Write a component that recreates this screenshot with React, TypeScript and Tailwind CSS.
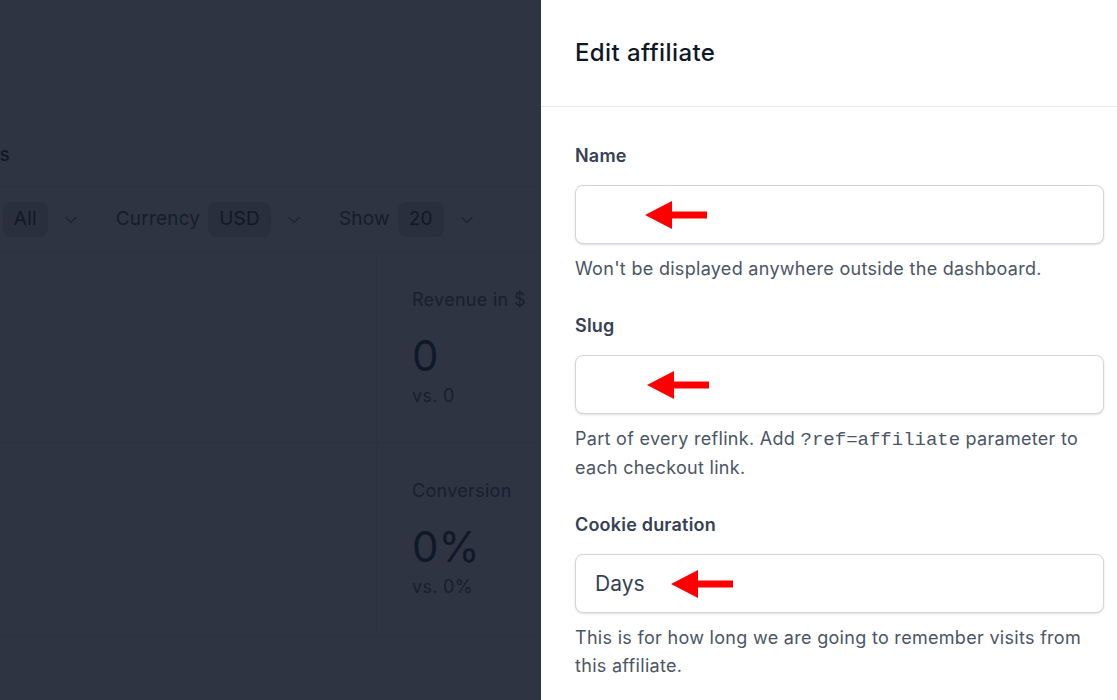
import { ChevronDown } from "lucide-react";

const font = { fontFamily: "Inter, 'Noto Sans', sans-serif" };

const Arrow = ({ left }: { left: number }) => (
  <svg
    width="62"
    height="28"
    viewBox="0 0 62 28"
    className="absolute top-1/2 -translate-y-1/2"
    style={{ left }}
  >
    <polygon points="0,14 27,0 27,10.5 62,10.5 62,17.5 27,17.5 27,28" fill="#ff0000" />
  </svg>
);

const Filter = ({ label, value, className = "" }: { label: string; value: string; className?: string }) => (
  <div className={`flex items-center ${className}`}>
    <span className="text-gray-700">{label}</span>
    <span className="ml-[8px] rounded-lg bg-gray-300 px-[11px] py-[3px] text-gray-900">{value}</span>
    <ChevronDown className="ml-[13px] h-5 w-5 text-gray-500" strokeWidth={1.75} />
  </div>
);

const Stat = ({ label, value, prev, pt }: { label: string; value: string; prev: string; pt: string }) => (
  <div className={`border-b border-gray-200 px-[35px] ${pt}`}>
    <div className="text-[18px] leading-[27px] tracking-[0.3px] text-gray-600">{label}</div>
    <div className="mt-[17px] text-[42px] leading-[52px] text-gray-900">{value}</div>
    <div className="text-[18px] leading-[27px] tracking-[0.3px] text-gray-600">{prev}</div>
  </div>
);

const Field = ({
  label,
  arrow,
  value,
  children,
}: {
  label: string;
  arrow: number;
  value?: string;
  children: React.ReactNode;
}) => (
  <div className="flex flex-col">
    <label className="text-[18px] font-semibold leading-[24px] tracking-[0.2px] text-gray-700">{label}</label>
    <div className="relative mt-[17px] flex h-[59px] items-center rounded-lg border border-gray-300 bg-white px-[19px] shadow-sm">
      {value && <span className="text-[21px] text-gray-700">{value}</span>}
      <Arrow left={arrow} />
    </div>
    <p className="mt-[11px] text-[18px] leading-[28px] tracking-[0.3px] text-gray-600">{children}</p>
  </div>
);

export default function App() {
  return (
    <div className="relative h-[700px] w-[1117px] overflow-hidden bg-white" style={font}>
      {/* page behind the drawer */}
      <div className="flex flex-col">
        <div className="flex h-[187px] items-end border-b border-gray-200 pb-[17px]">
          <h1 className="-ml-[73px] text-[19px] font-medium tracking-[0.3px] text-gray-800">Affiliates</h1>
        </div>
        <div className="flex h-[66px] items-center gap-[35px] border-b border-gray-200 text-[19px] tracking-[0.2px]">
          <Filter label="Status" value="All" className="-ml-[63px]" />
          <Filter label="Currency" value="USD" />
          <Filter label="Show" value="20" />
        </div>
        <div className="grid grid-cols-[377px_1fr]">
          <div className="h-[190px] border-r border-b border-gray-200" />
          <Stat label="Revenue in $" value="0" prev="vs. 0" pt="pt-[33px]" />
          <div className="h-[193px] border-r border-b border-gray-200" />
          <Stat label="Conversion" value="0%" prev="vs. 0%" pt="pt-[34px]" />
        </div>
      </div>

      {/* backdrop */}
      <div className="absolute inset-0 bg-[#111827]/[0.88]" />

      {/* drawer */}
      <div className="absolute top-0 right-0 flex h-full w-[576px] flex-col bg-white">
        <div className="flex h-[107px] shrink-0 items-center border-b border-gray-200 px-[34px]">
          <h2 className="text-[24px] font-medium tracking-[0.4px] text-gray-900">Edit affiliate</h2>
        </div>
        <div className="flex w-[563px] flex-col gap-[31px] pt-[37px] pl-[34px]">
          <Field label="Name" arrow={69}>
            Won't be displayed anywhere outside the dashboard.
          </Field>
          <Field label="Slug" arrow={71}>
            Part of every reflink. Add{" "}
            <code className="text-[19px] tracking-normal" style={{ fontFamily: "'Liberation Mono', monospace" }}>
              ?ref=affiliate
            </code>{" "}
            parameter to each checkout link.
          </Field>
          <Field label="Cookie duration" arrow={95} value="Days">
            This is for how long we are going to remember visits from this affiliate.
          </Field>
        </div>
      </div>
    </div>
  );
}
